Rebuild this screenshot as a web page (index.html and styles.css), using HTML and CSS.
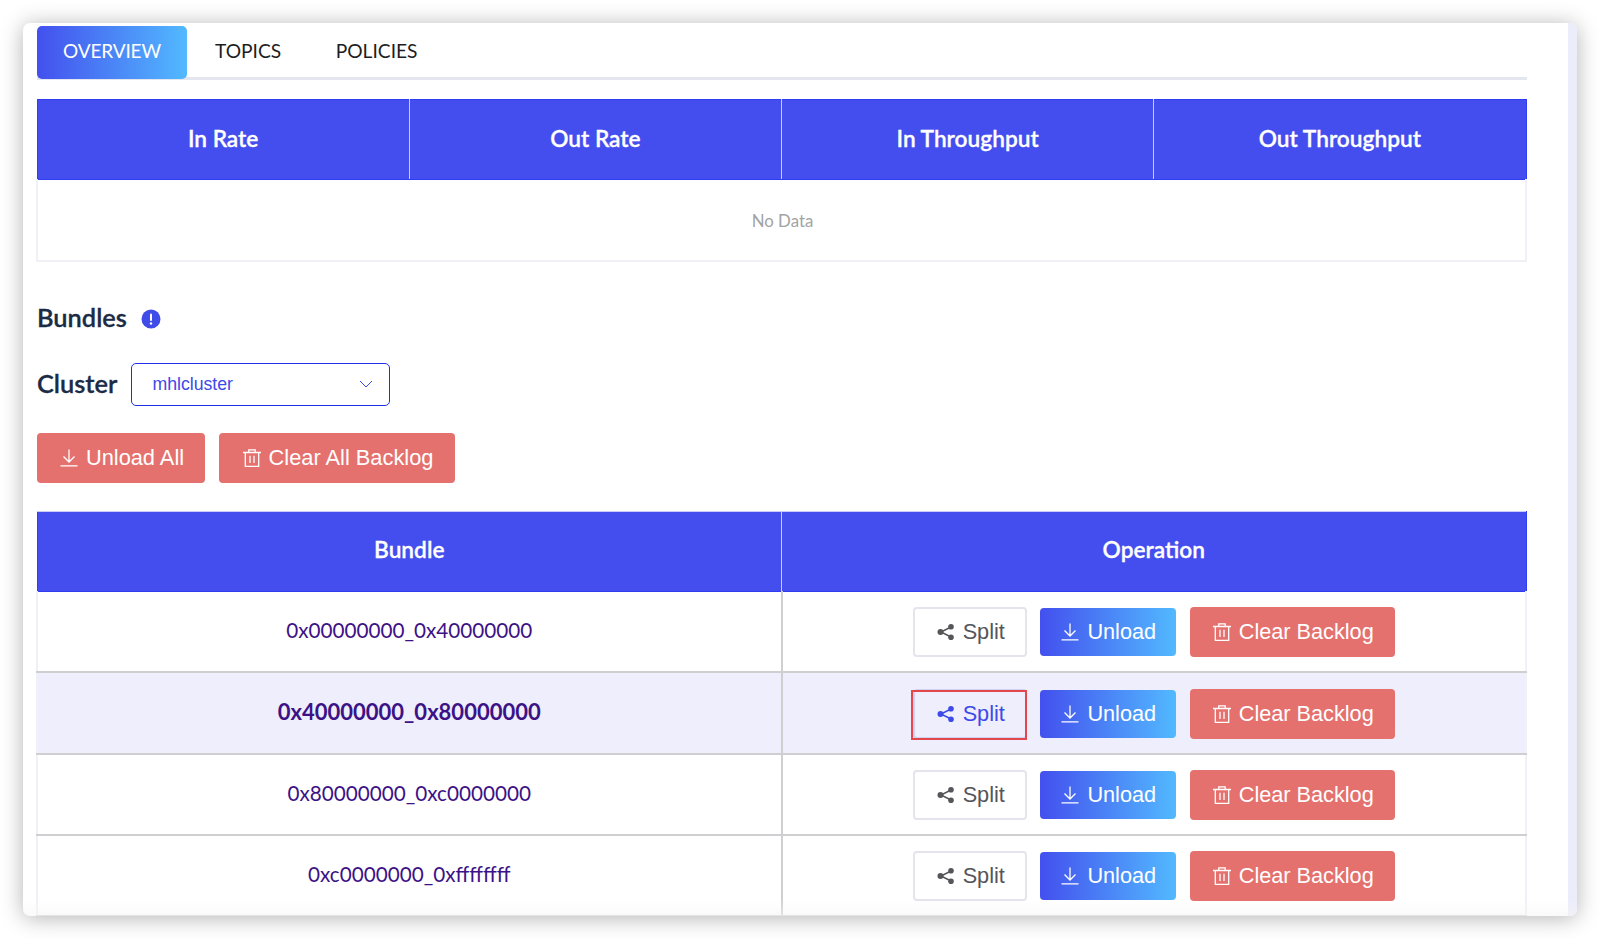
FILE: index.html
```html
<!DOCTYPE html>
<html lang="en">
<head>
<meta charset="utf-8">
<title>Namespace overview</title>
<link rel="stylesheet" href="styles.css">
</head>
<body>
<svg class="defs" width="0" height="0" aria-hidden="true">
  <symbol id="i-down" viewBox="0 0 18 18"><path d="M9 .5v12.500M3.500 7.500 9 13l5.500-5.500M.5 16.900h17" fill="none" stroke="currentColor" stroke-width="1.300"/></symbol>
  <symbol id="i-trash" viewBox="0 0 18 18"><path d="M0 3.500h18M2.300 3.500v13.800h13.400V3.500M5.800 3.500V.8h6.400v2.700M7 6.800v7.200M11 6.800v7.200" fill="none" stroke="currentColor" stroke-width="1.300"/></symbol>
  <symbol id="i-share" viewBox="0 0 18 18"><path d="M14 4 4 9l10 5" fill="none" stroke="currentColor" stroke-width="1.500"/><circle cx="14" cy="3.800" r="2.800" fill="currentColor"/><circle cx="3.500" cy="9" r="3" fill="currentColor"/><circle cx="14" cy="14.200" r="2.800" fill="currentColor"/></symbol>
</svg>
<div class="card">
  <main class="main">
    <nav class="tabs">
      <a class="tab active">OVERVIEW</a>
      <a class="tab">TOPICS</a>
      <a class="tab">POLICIES</a>
    </nav>
    <table class="grid rates">
      <thead><tr><th>In Rate</th><th>Out Rate</th><th>In Throughput</th><th>Out Throughput</th></tr></thead>
      <tbody><tr><td colspan="4" class="empty">No Data</td></tr></tbody>
    </table>
    <h2 class="title">Bundles
      <svg class="info" viewBox="0 0 20 20" aria-hidden="true"><circle cx="10" cy="10" r="9.500" fill="#3f4ce8"/><rect x="9" y="4.500" width="2" height="7.500" rx="1" fill="#fff"/><circle cx="10" cy="14.500" r="1.200" fill="#fff"/></svg>
    </h2>
    <div class="cluster">
      <span class="cluster-label">Cluster</span>
      <div class="select"><span>mhlcluster</span>
        <svg class="chev" viewBox="0 0 14 8" aria-hidden="true"><path d="M1 1l6 6 6-6" fill="none" stroke="#3d49e8" stroke-width="1"/></svg>
      </div>
    </div>
    <div class="actions">
      <button class="btn danger big"><svg class="ic"><use href="#i-down"/></svg>Unload All</button>
      <button class="btn danger big"><svg class="ic"><use href="#i-trash"/></svg>Clear All Backlog</button>
    </div>
    <table class="grid bundles">
      <thead><tr><th>Bundle</th><th>Operation</th></tr></thead>
      <tbody>
        <tr>
          <td class="name">0x00000000_0x40000000</td>
          <td><div class="ops">
            <button class="btn plain"><svg class="ic"><use href="#i-share"/></svg>Split</button>
            <button class="btn primary"><svg class="ic"><use href="#i-down"/></svg>Unload</button>
            <button class="btn danger"><svg class="ic"><use href="#i-trash"/></svg>Clear Backlog</button>
          </div></td>
        </tr>
        <tr class="hot">
          <td class="name">0x40000000_0x80000000</td>
          <td><div class="ops">
            <button class="btn plain marked"><svg class="ic"><use href="#i-share"/></svg>Split</button>
            <button class="btn primary"><svg class="ic"><use href="#i-down"/></svg>Unload</button>
            <button class="btn danger"><svg class="ic"><use href="#i-trash"/></svg>Clear Backlog</button>
          </div></td>
        </tr>
        <tr>
          <td class="name">0x80000000_0xc0000000</td>
          <td><div class="ops">
            <button class="btn plain"><svg class="ic"><use href="#i-share"/></svg>Split</button>
            <button class="btn primary"><svg class="ic"><use href="#i-down"/></svg>Unload</button>
            <button class="btn danger"><svg class="ic"><use href="#i-trash"/></svg>Clear Backlog</button>
          </div></td>
        </tr>
        <tr>
          <td class="name">0xc0000000_0xffffffff</td>
          <td><div class="ops">
            <button class="btn plain"><svg class="ic"><use href="#i-share"/></svg>Split</button>
            <button class="btn primary"><svg class="ic"><use href="#i-down"/></svg>Unload</button>
            <button class="btn danger"><svg class="ic"><use href="#i-trash"/></svg>Clear Backlog</button>
          </div></td>
        </tr>
      </tbody>
    </table>
  </main>
  <div class="rail"></div>
</div>
</body>
</html>
```

FILE: styles.css
```css
* { box-sizing: border-box; }
html, body { margin: 0; height: 100%; background: #fff; overflow: hidden; }
body { padding: 23px; font-family: Lato, "Liberation Sans", sans-serif; color: #1c2b45; }
.defs { display: block; height: 0; }
.card {
  position: relative;
  display: flex;
  height: 893px;
  background: #fff;
  border-radius: 7px;
  overflow: hidden;
  box-shadow: 0 2px 22px rgba(0, 0, 0, .3);
}
.card::after { content: ""; position: absolute; left: 0; right: 0; bottom: 0; height: 16px; background: linear-gradient(rgba(245, 245, 245, 0), rgba(245, 245, 245, .55)); pointer-events: none; }
.main { flex: 1; min-width: 0; padding: 3px 41px 0 14px; }
.rail { width: 9px; background: #ecedfb; }

.tabs { display: flex; height: 54px; border-bottom: 3px solid #e4e6ef; }
.tab { display: flex; align-items: center; height: 53px; padding: 0 26.500px 4px 28px; font-size: 19.200px; color: #1d1d1f; }
.tab.active { width: 150px; justify-content: center; padding: 0 0 4px; color: #fff; font-size: 19px; letter-spacing: -.15px; border-radius: 5px; background: linear-gradient(90deg, #4350ee, #52b9ff); }

.grid { width: calc(100% + 1px); margin-left: -1px; border-collapse: collapse; table-layout: fixed; }
.grid th { height: 80px; padding: 0 0 3px; background: #444eee; color: #fff; font-size: 22.700px; font-weight: 600; -webkit-text-stroke: .3px #fff; border: 1px solid #2f3cf0; border-left-color: #c9cdf6; border-right-color: #c9cdf6; }
.grid th:first-child { border-left-color: #2f3cf0; }
.grid th:last-child { border-right-color: #2f3cf0; }
.rates { margin-top: 19px; }
.rates td.empty { height: 81px; padding: 1px 0 0 2px; text-align: center; font-size: 16.800px; color: #a3a3a3; border: 2px solid #f0f1f6; border-top: 0; }

.title { display: flex; align-items: center; gap: 14px; margin: 40px 0 0; height: 32px; padding-bottom: 2px; font-size: 25.400px; font-weight: 600; -webkit-text-stroke: .3px #1c2b45; color: #1c2b45; }
.info { width: 20px; height: 20px; margin-top: 5px; }

.cluster { display: flex; align-items: center; gap: 14px; margin-top: 29px; }
.cluster-label { padding-bottom: 3px; font-size: 25.400px; font-weight: 600; -webkit-text-stroke: .3px #1c2b45; }
.select { display: flex; align-items: center; justify-content: space-between; width: 259px; height: 43px; padding: 0 16px 0 20px; border: 1px solid #1f2fe8; border-radius: 5px; font: 17.700px "Liberation Sans", sans-serif; color: #3d49e8; }
.chev { width: 14px; height: 8px; }

.actions { display: flex; gap: 14px; margin-top: 27px; }
.btn { display: inline-flex; align-items: center; justify-content: center; gap: 8px; height: 50px; padding: 0 0 0 2px; border: 0; border-radius: 4px; font: 21.700px "Liberation Sans", sans-serif; }
.ic { width: 18px; height: 18px; flex: none; }
.danger { color: #fff; background: #e4716e; }
.big { font-size: 21.800px; }
.big:first-child { width: 168px; }
.big:last-child { width: 236px; }

.bundles { margin-top: 28px; }
.bundles th { height: 80px; border-top-color: #c9cdf6; }
.bundles td { height: 81.250px; padding: 0; text-align: center; border-bottom: 2px solid #cfcfd2; }
.bundles td:first-child { padding-bottom: 2px; border-left: 2px solid #f0f1f6; border-right: 2px solid #cfcfd2; }
.bundles td:last-child { border-right: 2px solid #f0f1f6; }
.name { font-size: 20.700px; font-weight: 400; color: #3c1286; }
.hot td { background: #eeeefc; }
.hot .name { font-size: 22px; font-weight: 700; }

.ops { display: flex; justify-content: center; align-items: center; gap: 14px; padding: 2px 1px 0 0; }
.plain { width: 114px; margin: 0 -1px 0 1px; padding-left: 2px; background: #fff; color: #55555a; border: 2px solid #e4e4ec; }
.primary { width: 136px; height: 48px; color: #fff; background: linear-gradient(90deg, #4350ee, #52b9ff); }
.ops .danger { width: 205px; }
.hot .plain { position: relative; background: #eeeefc; color: #3d49e8; border-color: #cfd1f4; }
.marked::after { content: ""; position: absolute; inset: -1px -2px -3px -4px; border: 2px solid #e4474a; }
```
